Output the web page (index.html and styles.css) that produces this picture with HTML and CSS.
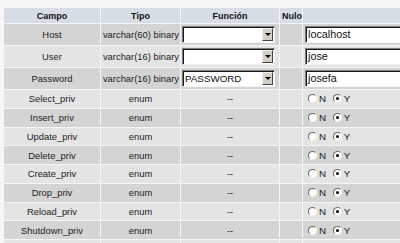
FILE: index.html
```html
<!DOCTYPE html>
<html>
<head>
<meta charset="utf-8">
<link rel="stylesheet" href="styles.css">
</head>
<body>
<table class="grid">
  <colgroup>
    <col class="c1"><col class="c2"><col class="c3"><col class="c4"><col class="c5">
  </colgroup>
  <tr class="head">
    <th>Campo</th><th>Tipo</th><th>Función</th><th class="nulo">Nulo</th><th></th>
  </tr>
  <tr class="inp dark">
    <td>Host</td><td class="tipo">varchar(60) binary</td>
    <td class="fn"><div class="sel"><span class="val"></span><span class="btn"><i></i></span></div></td>
    <td></td>
    <td class="vc"><div class="txt">localhost</div></td>
  </tr>
  <tr class="inp light">
    <td>User</td><td class="tipo">varchar(16) binary</td>
    <td class="fn"><div class="sel"><span class="val"></span><span class="btn"><i></i></span></div></td>
    <td></td>
    <td class="vc"><div class="txt">jose</div></td>
  </tr>
  <tr class="inp dark">
    <td>Password</td><td class="tipo">varchar(16) binary</td>
    <td class="fn"><div class="sel"><span class="val">PASSWORD</span><span class="btn"><i></i></span></div></td>
    <td></td>
    <td class="vc"><div class="txt">josefa</div></td>
  </tr>
  <tr class="rad light"><td>Select_priv</td><td>enum</td><td>--</td><td></td><td class="rc"><span class="r"></span>N <span class="r on"></span>Y</td></tr>
  <tr class="rad dark"><td>Insert_priv</td><td>enum</td><td>--</td><td></td><td class="rc"><span class="r"></span>N <span class="r on"></span>Y</td></tr>
  <tr class="rad light"><td>Update_priv</td><td>enum</td><td>--</td><td></td><td class="rc"><span class="r"></span>N <span class="r on"></span>Y</td></tr>
  <tr class="rad dark"><td>Delete_priv</td><td>enum</td><td>--</td><td></td><td class="rc"><span class="r"></span>N <span class="r on"></span>Y</td></tr>
  <tr class="rad light"><td>Create_priv</td><td>enum</td><td>--</td><td></td><td class="rc"><span class="r"></span>N <span class="r on"></span>Y</td></tr>
  <tr class="rad dark"><td>Drop_priv</td><td>enum</td><td>--</td><td></td><td class="rc"><span class="r"></span>N <span class="r on"></span>Y</td></tr>
  <tr class="rad light"><td>Reload_priv</td><td>enum</td><td>--</td><td></td><td class="rc"><span class="r"></span>N <span class="r on"></span>Y</td></tr>
  <tr class="rad dark"><td>Shutdown_priv</td><td>enum</td><td>--</td><td></td><td class="rc"><span class="r"></span>N <span class="r on"></span>Y</td></tr>
  <tr class="rad light"><td></td><td></td><td></td><td></td><td></td></tr>
</table>
</body>
</html>
```
FILE: styles.css
```css
html, body {
  margin: 0;
  background: #f6f6f6;
  overflow: hidden;
}
body {
  padding: 7px 0 0 3px;
  width: 460px;
  height: 243px;
  box-sizing: border-box;
  font-family: "Liberation Sans", Arial, sans-serif;
  font-size: 9.4px;
  color: #222;
}
.grid {
  border-collapse: separate;
  border-spacing: 1px;
  table-layout: fixed;
  width: 456px;
}
.c1 { width: 96px; }
.c2 { width: 79px; }
.c3 { width: 98px; }
.c4 { width: 22px; }
.c5 { width: 156px; }
.grid td, .grid th {
  padding: 0;
  text-align: center;
  white-space: nowrap;
  overflow: hidden;
}
.head th {
  height: 15px;
  background: #d6dde5;
  font-weight: bold;
  font-size: 9px;
  color: #111;
}
.head th.nulo { text-align: left; padding-left: 2px; }
.dark td { background: #d4d4d4; }
.light td { background: #e4e4e4; }
.inp td { height: 21px; }
.rad td { height: 17.75px; }
.tipo { text-align: right !important; padding-right: 1px !important; }
.fn { text-align: left !important; padding-left: 1px !important; }
.sel {
  position: relative;
  width: 93px;
  height: 17px;
  box-sizing: border-box;
  background: #fff;
  border: 1px solid;
  border-color: #7c7c7c #f4f4f4 #f4f4f4 #7c7c7c;
  box-shadow: inset 1px 1px 0 #1a1a1a;
  display: flex;
  align-items: center;
}
.sel .val {
  flex: 1;
  padding-left: 2px;
  font-size: 9.8px;
  color: #111;
  line-height: 15px;
}
.sel .btn {
  width: 11px;
  height: 13px;
  margin-right: 1px;
  background: #d4d0c8;
  border: 1px solid;
  border-color: #f0f0f0 #404040 #404040 #f0f0f0;
  box-sizing: border-box;
  display: flex;
  align-items: center;
  justify-content: center;
}
.sel .btn i {
  width: 0; height: 0;
  border-left: 3px solid transparent;
  border-right: 3px solid transparent;
  border-top: 3px solid #000;
}
.vc { text-align: left !important; padding-left: 2px !important; }
.txt {
  height: 17px;
  box-sizing: border-box;
  background: #fff;
  border: 1px solid;
  border-color: #7c7c7c #f4f4f4 #f4f4f4 #7c7c7c;
  box-shadow: inset 1px 1px 0 #1a1a1a;
  padding-left: 2px;
  font-size: 10.8px;
  line-height: 15px;
  color: #111;
}
.rc {
  text-align: left !important;
  padding-left: 5px !important;
  font-size: 9.8px;
  color: #222;
}
.r {
  display: inline-block;
  width: 9px;
  height: 9px;
  box-sizing: border-box;
  border-radius: 50%;
  border: 1px solid;
  border-color: #6a6a6a #f2f2f2 #f2f2f2 #6a6a6a;
  background: #fff;
  vertical-align: -1px;
  margin-right: 2px;
  position: relative;
}
.r.on::after {
  content: "";
  position: absolute;
  left: 2px;
  top: 2px;
  width: 3px;
  height: 3px;
  border-radius: 50%;
  background: #000;
}
.rc .r.on { margin-left: 4px; }
```
